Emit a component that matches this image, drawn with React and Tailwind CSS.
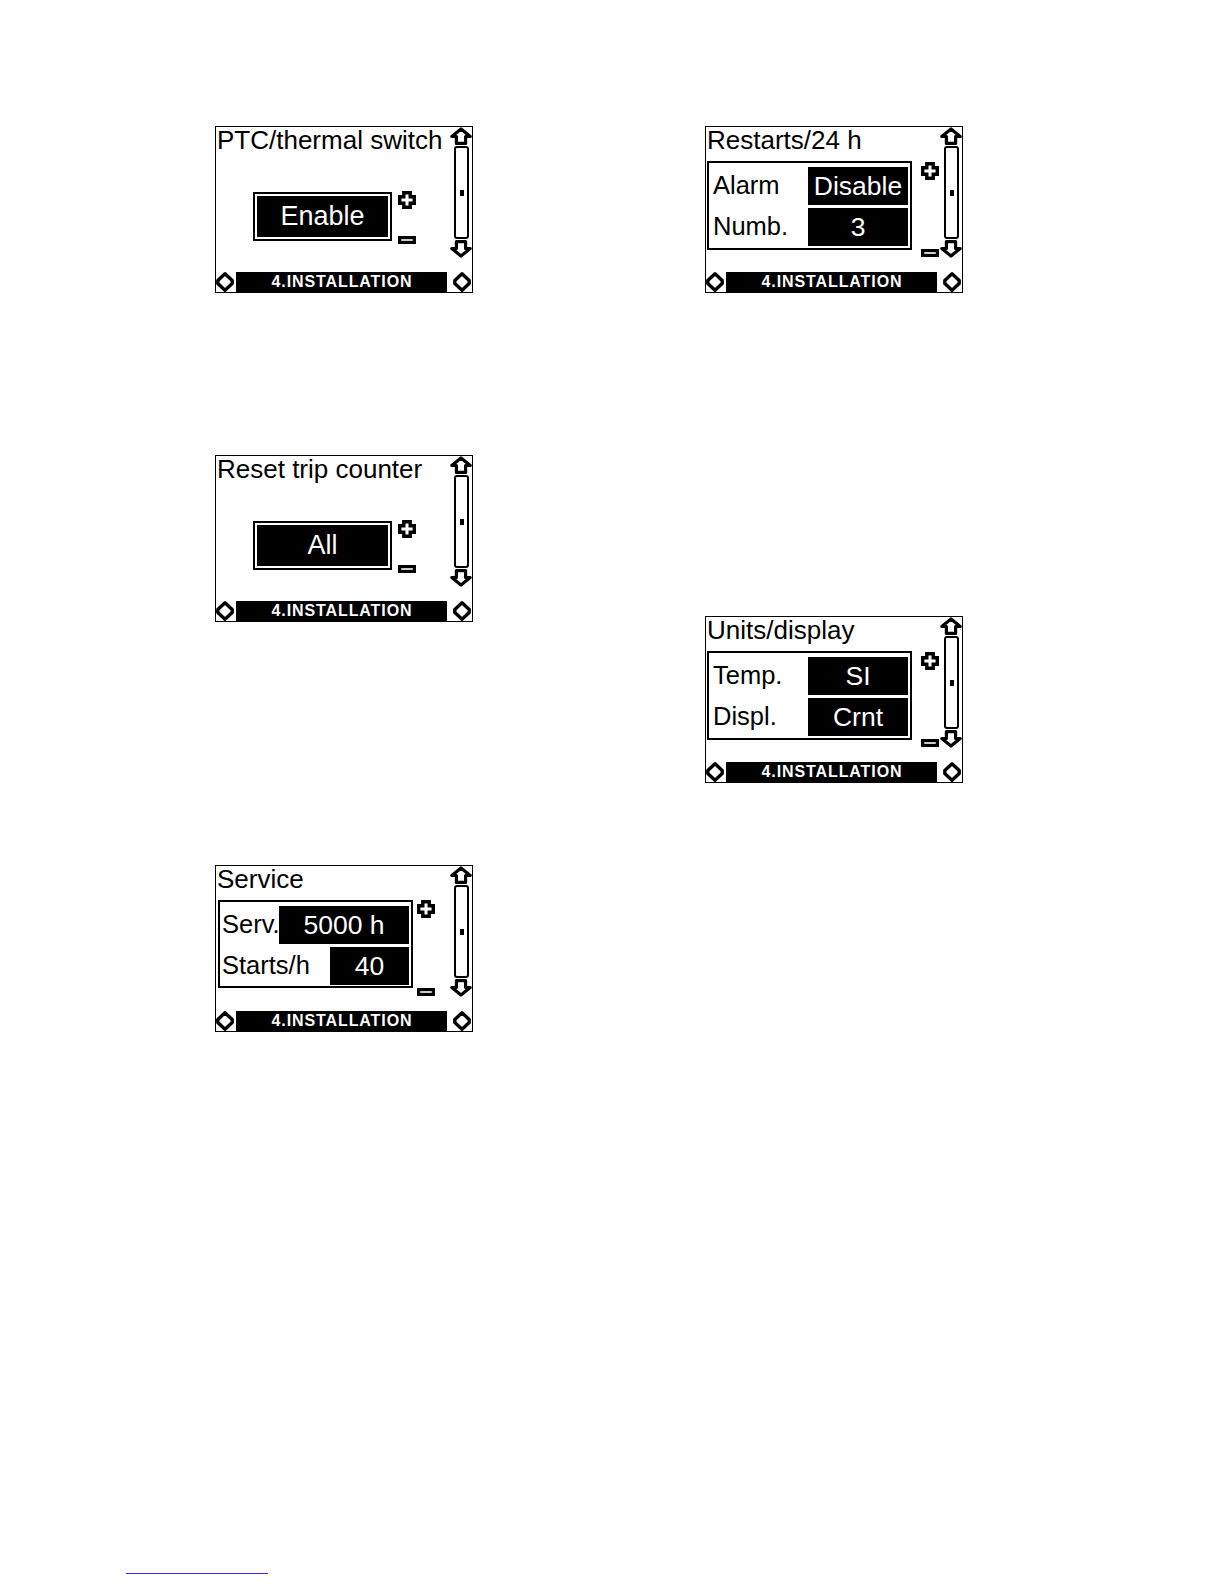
import React from "react";

function UpArrow() {
  return (
    <svg width="22" height="18" viewBox="0 0 22 18">
      <polygon points="11,2 20.2,9.5 15.6,9.5 15.6,16.4 6.4,16.4 6.4,9.5 1.8,9.5" fill="white" stroke="black" strokeWidth="3.2" strokeLinejoin="round" />
    </svg>
  );
}

function DownArrow() {
  return (
    <svg width="22" height="18" viewBox="0 0 22 18">
      <polygon points="6.4,1.6 15.6,1.6 15.6,8.5 20.2,8.5 11,16 1.8,8.5 6.4,8.5" fill="white" stroke="black" strokeWidth="3.2" strokeLinejoin="round" />
    </svg>
  );
}

function Diamond() {
  return (
    <svg width="18" height="20" viewBox="0 0 18 20">
      <polygon points="9,1.8 16.2,8.5 16.2,11.5 9,18.2 1.8,11.5 1.8,8.5" fill="white" stroke="black" strokeWidth="3.4" strokeLinejoin="round" />
    </svg>
  );
}

function Plus() {
  return (
    <svg width="18" height="18" viewBox="0 0 18 18">
      <polygon
        points="5.8,1.7 12.2,1.7 12.2,5.8 16.3,5.8 16.3,12.2 12.2,12.2 12.2,16.3 5.8,16.3 5.8,12.2 1.7,12.2 1.7,5.8 5.8,5.8"
        fill="white"
        stroke="black"
        strokeWidth="3.4"
      />
    </svg>
  );
}

function Minus() {
  return (
    <svg width="18" height="8" viewBox="0 0 18 8">
      <rect x="1.6" y="1.6" width="14.8" height="4.8" fill="white" stroke="black" strokeWidth="3.2" />
    </svg>
  );
}

function ScrollCol() {
  return (
    <div className="w-[22px] flex flex-col items-center">
      <UpArrow />
      <div className="mt-[1px] w-[15px] h-[93px] border-2 border-black rounded-[3px] flex items-center justify-center">
        <div className="ml-[2px] w-[4px] h-[6px] bg-black" />
      </div>
      <div className="mt-[1px]">
        <DownArrow />
      </div>
    </div>
  );
}

function BottomBar() {
  return (
    <div className="h-[20px] flex items-center">
      <div className="flex">
        <Diamond />
      </div>
      <div className="ml-[2px] w-[211px] h-full bg-black flex items-center justify-center">
        <span className="text-white font-bold text-[16px] leading-none tracking-[0.9px] pl-[1px]">4.INSTALLATION</span>
      </div>
      <div className="ml-[6px] flex">
        <Diamond />
      </div>
    </div>
  );
}

function Frame({ title, children }) {
  return (
    <div className="w-[258px] h-[167px] border border-black flex flex-col bg-white">
      <div className="flex h-[145px]">
        <div className="flex-1 flex flex-col">
          <div className="pl-[1px] pt-[1px] text-[26px] leading-[25px] whitespace-nowrap">{title}</div>
          {children}
        </div>
        <ScrollCol />
      </div>
      <BottomBar />
    </div>
  );
}

function ScreenA({ title, value }) {
  return (
    <Frame title={title}>
      <div className="flex ml-[37px] mt-[38px] items-start">
        <div className="mt-[1px] w-[139px] h-[49px] border-2 border-black p-[2px]">
          <div className="h-full bg-black text-white flex items-center justify-center text-[27px] leading-none">
            {value}
          </div>
        </div>
        <div className="ml-[6px] h-[53px] flex flex-col justify-between">
          <Plus />
          <Minus />
        </div>
      </div>
    </Frame>
  );
}

function ScreenB({ title, rows, boxClass, pmClass, labelPad }) {
  return (
    <Frame title={title}>
      <div className="flex mt-[8px] items-start">
        <div className={boxClass}>
          {rows.map((r, i) => (
            <div key={i} className="flex items-center h-[38px]">
              <div className={"flex-1 min-w-0 whitespace-nowrap text-[25.5px] leading-none " + labelPad}>{r.label}</div>
              <div className={"shrink-0 h-[38px] bg-black text-white flex items-center justify-center text-[26.5px] leading-none " + r.w}>
                {r.value}
              </div>
            </div>
          ))}
        </div>
        <div className={pmClass}>
          <Plus />
          <Minus />
        </div>
      </div>
    </Frame>
  );
}

export default function App() {
  return (
    <div className="w-[1224px] h-[1584px] bg-white flex flex-col text-black font-['Liberation_Sans',Arial,sans-serif]">
      <div className="flex pt-[126px] pl-[215px] gap-[232px]">
        <div className="flex flex-col">
          <ScreenA title="PTC/thermal switch" value="Enable" />
          <div className="mt-[162px]">
            <ScreenA title="Reset trip counter" value="All" />
          </div>
          <div className="mt-[243px]">
            <ScreenB
              title="Service"
              boxClass="ml-[2px] w-[195px] h-[88px] border-2 border-black pt-[4px] pr-[2px] flex flex-col gap-[3px]"
              pmClass="ml-[4px] h-[96px] flex flex-col justify-between"
              labelPad="pl-[2px]"
              rows={[
                { label: "Serv.", value: "5000 h", w: "w-[130px]" },
                { label: "Starts/h", value: "40", w: "w-[79px]" },
              ]}
            />
          </div>
        </div>
        <div className="flex flex-col">
          <ScreenB
            title="Restarts/24 h"
            boxClass="ml-[1px] w-[205px] h-[89px] border-2 border-black pt-[4px] pr-[2px] flex flex-col gap-[3px]"
            pmClass="ml-[9px] mt-[1px] h-[95px] flex flex-col justify-between"
            labelPad="pl-[4px]"
            rows={[
              { label: "Alarm", value: "Disable", w: "w-[100px]" },
              { label: "Numb.", value: "3", w: "w-[100px]" },
            ]}
          />
          <div className="mt-[323px]">
            <ScreenB
              title="Units/display"
              boxClass="ml-[1px] w-[205px] h-[89px] border-2 border-black pt-[4px] pr-[2px] flex flex-col gap-[3px]"
              pmClass="ml-[9px] mt-[1px] h-[95px] flex flex-col justify-between"
              labelPad="pl-[4px]"
              rows={[
                { label: "Temp.", value: "SI", w: "w-[100px]" },
                { label: "Displ.", value: "Crnt", w: "w-[100px]" },
              ]}
            />
          </div>
        </div>
      </div>
      <div className="mt-auto mb-[10px] ml-[126px] w-[142px] h-px bg-[#3030ff]" />
    </div>
  );
}
